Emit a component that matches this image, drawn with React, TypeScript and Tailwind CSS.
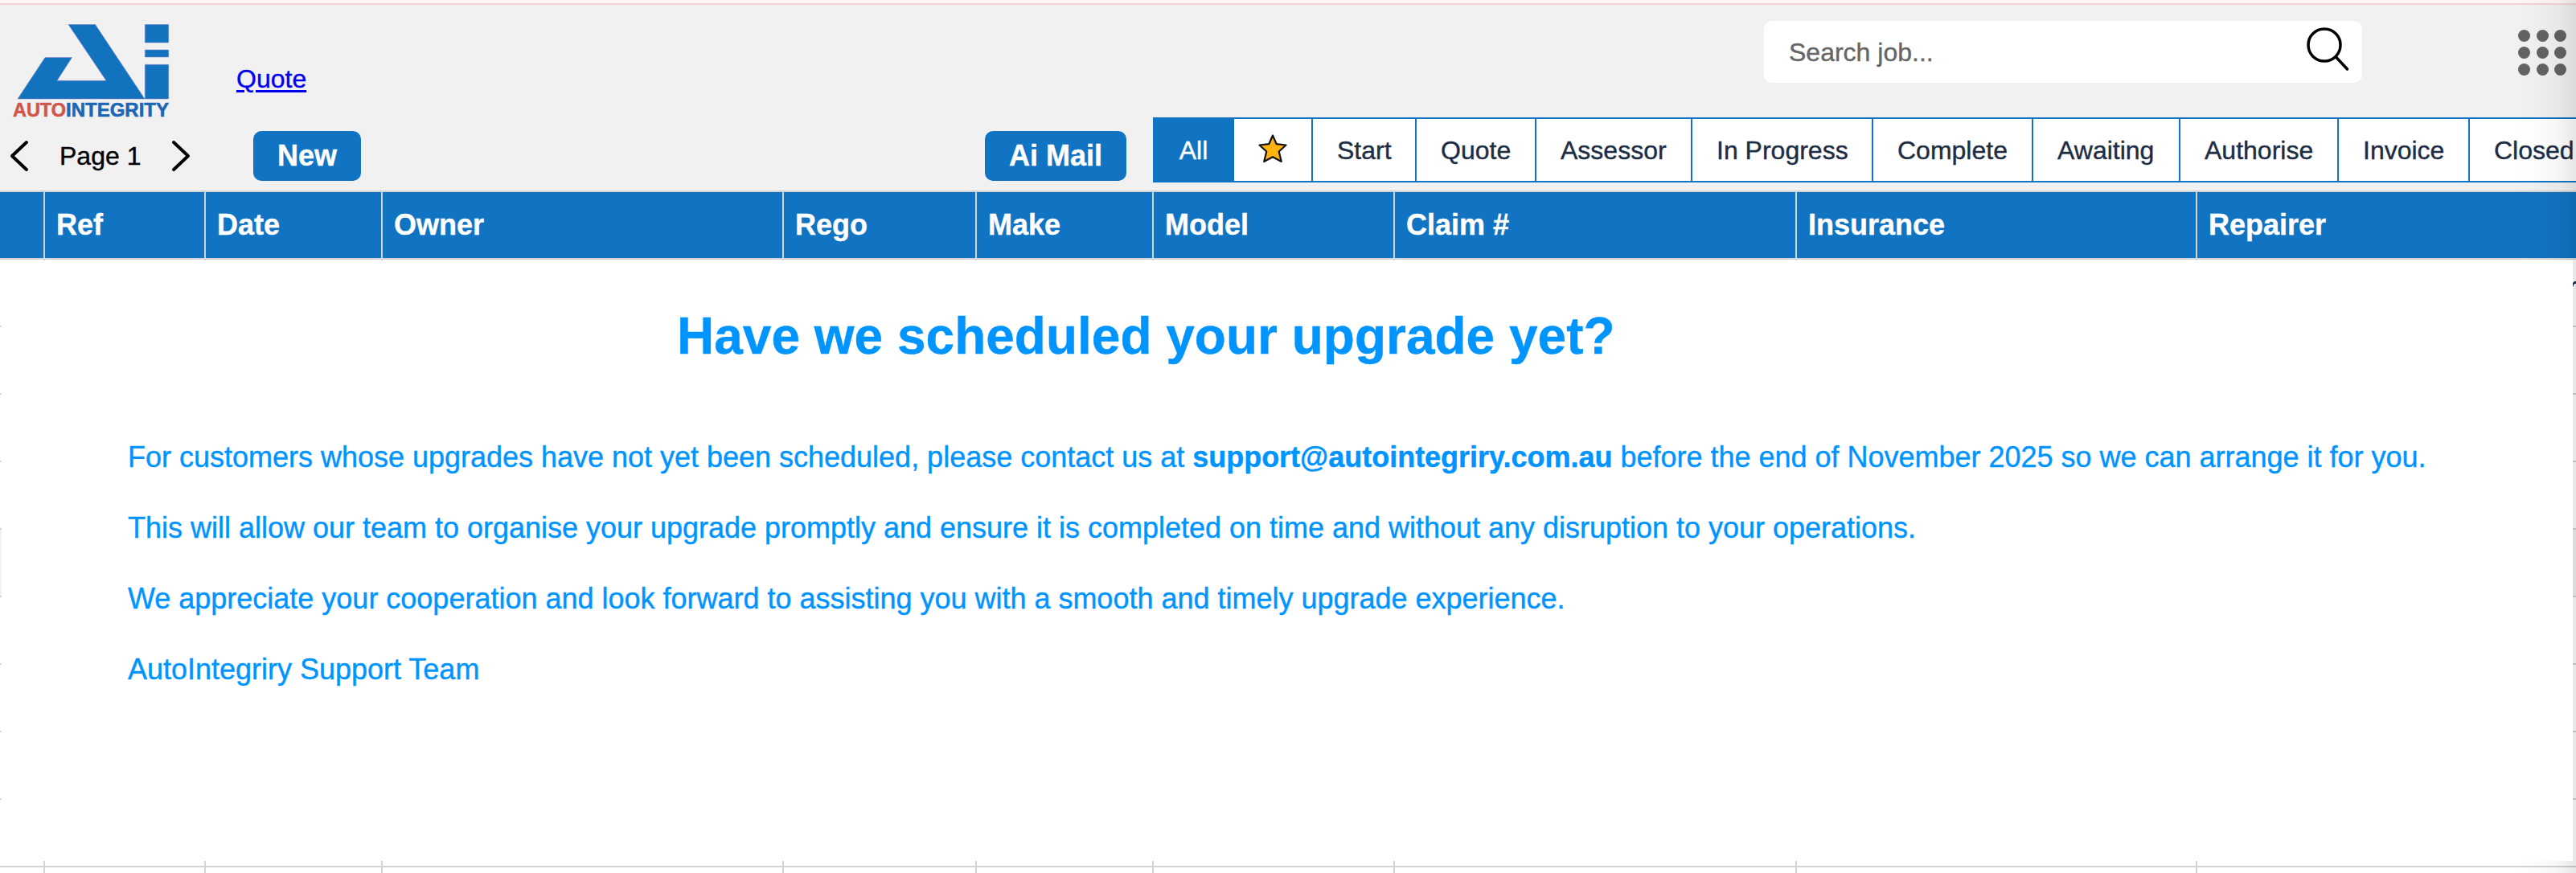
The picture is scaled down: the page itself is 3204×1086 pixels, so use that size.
const tabs = [
  { label: 'Start', width: 'w-[129px]' },
  { label: 'Quote', width: 'w-[149px]' },
  { label: 'Assessor', width: 'w-[194px]' },
  { label: 'In Progress', width: 'w-[225px]' },
  { label: 'Complete', width: 'w-[199px]' },
  { label: 'Awaiting', width: 'w-[183px]' },
  { label: 'Authorise', width: 'w-[197px]' },
  { label: 'Invoice', width: 'w-[163px]' },
  { label: 'Closed', width: 'w-[170px]' },
];

const columns = [
  { label: '', width: 'w-[56px]' },
  { label: 'Ref', width: 'w-[200px]' },
  { label: 'Date', width: 'w-[220px]' },
  { label: 'Owner', width: 'w-[499px]' },
  { label: 'Rego', width: 'w-[240px]' },
  { label: 'Make', width: 'w-[220px]' },
  { label: 'Model', width: 'w-[300px]' },
  { label: 'Claim #', width: 'w-[500px]' },
  { label: 'Insurance', width: 'w-[498px]' },
  { label: 'Repairer', width: 'w-[499px]' },
];

const rows = [0, 1, 2, 3, 4, 5, 6, 7, 8, 9];

function Logo() {
  return (
    <svg width="212" height="125" viewBox="0 24 212 125" className="shrink-0">
      <g fill="#1172bd" stroke="#7f86cf" strokeWidth="0.6">
        <path d="M85 30.5H118.500L180 123H22L56 71.500H89.500L71 100.300H132Z" />
        <path d="M180.300 30.500H209.700V53H180.300ZM180.300 62H209.700V71H180.300ZM180.300 80.300H209.700V123H180.300Z" />
      </g>
      <text y="145" fontSize="24.5" fontWeight="700" strokeWidth="0.6" fontFamily="Liberation Sans, Arial, sans-serif">
        <tspan x="16" fill="#d0554c" stroke="#d0554c" textLength="66" lengthAdjust="spacingAndGlyphs">AUTO</tspan>
        <tspan x="82" fill="#1c67b4" stroke="#1c67b4" textLength="128" lengthAdjust="spacingAndGlyphs">INTEGRITY</tspan>
      </text>
    </svg>
  );
}

function Chevron({ d }: { d: string }) {
  return (
    <svg width="24" height="40" viewBox="0 0 24 40" fill="none" stroke="#000" strokeWidth="4" strokeLinecap="round" strokeLinejoin="round" className="shrink-0">
      <path d={d} />
    </svg>
  );
}

function Star() {
  return (
    <svg width="38" height="38" viewBox="0 0 38 38" fill="#ffb30f" stroke="#111" strokeWidth="2.200" strokeLinejoin="round">
      <path d="M19 2.500L23.700 13.200L35.500 14.500L26.700 22.500L29.800 35L19 29.300L8.200 35L11.300 22.500L2.500 14.500L14.300 13.200Z" />
    </svg>
  );
}

function AppsGrid() {
  return (
    <div className="grid grid-cols-[15px_15px_15px] gap-x-[7.5px] gap-y-[6px]">
      {[0, 1, 2, 3, 4, 5, 6, 7, 8].map((n) => (
        <span key={n} className="size-[15px] rounded-full bg-[#636363]" />
      ))}
    </div>
  );
}

function Header() {
  return (
    <header className="flex h-[231px] bg-[#f1f1f1]">
      <div className="flex w-[1434px] shrink-0 flex-col">
        <div className="flex h-[151px] pt-[18px]">
          <Logo />
          <a className="ml-[82px] mt-[56px] text-[32px] leading-[36px] text-[#0000ee] underline decoration-[3px] underline-offset-[3px]">Quote</a>
        </div>
        <div className="flex pt-[6px]">
          <div className="flex h-[62px] w-[315px] items-center pl-[12px]">
            <Chevron d="M21 3L3 20L21 37" />
            <span className="ml-[38px] w-[139px] text-[32px] leading-[36px]">Page 1</span>
            <Chevron d="M3 3L21 20L3 37" />
          </div>
          <button className="h-[62px] w-[134px] rounded-[10px] bg-[#1174c3] text-[36px] font-bold leading-[62px] text-white">New</button>
          <button className="ml-[776px] h-[62px] w-[176px] rounded-[10px] bg-[#1174c3] text-[36px] font-bold leading-[62px] text-white">Ai Mail</button>
        </div>
      </div>
      <div className="flex grow flex-col overflow-hidden">
        <div className="flex h-[140px] pt-[20px]">
          <div className="ml-[760px] flex h-[77px] w-[744px] shrink-0 rounded-[10px] bg-white pl-[31px]">
            <span className="w-[643px] pt-[21px] text-[32px] leading-[36px] text-[#666]">Search job...</span>
            <svg width="56" height="56" viewBox="0 0 56 56" fill="none" stroke="#000" strokeWidth="3.500" strokeLinecap="round" className="mt-[7px] shrink-0">
              <circle cx="23" cy="23" r="20" />
              <path d="M37.500 38L51.500 53" />
            </svg>
          </div>
          <div className="ml-[194px] mt-[10.500px] shrink-0">
            <AppsGrid />
          </div>
        </div>
        <nav className="flex h-[81px] border-y-2 border-[#1174c3] bg-white text-[32px] leading-[36px] text-[#1d2d44]">
          <div className="w-[101px] shrink-0 bg-[#1174c3] pt-[21px] text-center text-white">All</div>
          <div className="flex w-[98px] shrink-0 justify-center border-r-2 border-[#1174c3] pt-[18px]">
            <Star />
          </div>
          {tabs.map((tab) => (
            <div key={tab.label} className={`${tab.width} shrink-0 whitespace-nowrap border-r-2 border-[#1174c3] pl-[30px] pt-[21px]`}>
              {tab.label}
            </div>
          ))}
        </nav>
      </div>
    </header>
  );
}

function JobTable() {
  return (
    <div className="h-[849px] overflow-hidden">
      <div className="flex h-[86px] border-y-2 border-[#d3d3d3] bg-[#1174c3]">
        {columns.map((c) => (
          <div key={c.label} className={`${c.width} shrink-0 border-r-2 border-[#d3d3d3] pl-[14px] pt-[20px] text-[36px] font-bold leading-[41px] text-white`}>
            {c.label}
          </div>
        ))}
      </div>
      {rows.map((r) => (
        <div key={r} className={`flex h-[84px] border-b-2 border-[#d3d3d3] ${r === 4 ? 'bg-[#f1f1f1]' : 'bg-white'}`}>
          {columns.map((c) => (
            <div key={c.label} className={`${c.width} -mb-[2px] shrink-0 border-r-2 border-[#d3d3d3]`} />
          ))}
        </div>
      ))}
    </div>
  );
}

function UpgradeNotice() {
  return (
    <section className="absolute left-[2px] top-[324px] h-[747px] w-[3198px] bg-white text-[#0094ff]">
      <h1 className="ml-[840px] pt-[57px] text-[64px] font-bold leading-[74px] whitespace-nowrap">Have we scheduled your upgrade yet?</h1>
      <div className="ml-[157px] mt-[93px] flex flex-col gap-[47px] whitespace-nowrap text-[36px] leading-[41px] tracking-[-0.008px]">
        <p>
          For customers whose upgrades have not yet been scheduled, please contact us at <b>support@autointegriry.com.au</b> before the end of November 2025 so we can arrange it for you.
        </p>
        <p>This will allow our team to organise your upgrade promptly and ensure it is completed on time and without any disruption to your operations.</p>
        <p>We appreciate your cooperation and look forward to assisting you with a smooth and timely upgrade experience.</p>
        <p>AutoIntegriry Support Team</p>
      </div>
    </section>
  );
}

export default function App() {
  return (
    <div className="relative h-[1086px] w-[3204px] overflow-hidden bg-white font-['Liberation_Sans',Arial,sans-serif] text-black [-webkit-text-stroke:0.4px]">
      <div className="h-[6px] border-b-2 border-[#f0d5d7] bg-[#fff5f5]" />
      <Header />
      <JobTable />
      <div className="absolute right-0 top-0 h-full w-[76px] bg-[linear-gradient(to_right,rgba(0,0,0,0)_0%,rgba(0,0,0,0.01)_35%,rgba(0,0,0,0.035)_70%,rgba(0,0,0,0.095)_100%)]" />
      <UpgradeNotice />
      <svg width="4" height="8" viewBox="0 0 4 8" className="absolute right-0 top-[349px]">
        <path d="M0 3L2 1H4V4H2L0 8Z" fill="#1d2d44" />
      </svg>
    </div>
  );
}
